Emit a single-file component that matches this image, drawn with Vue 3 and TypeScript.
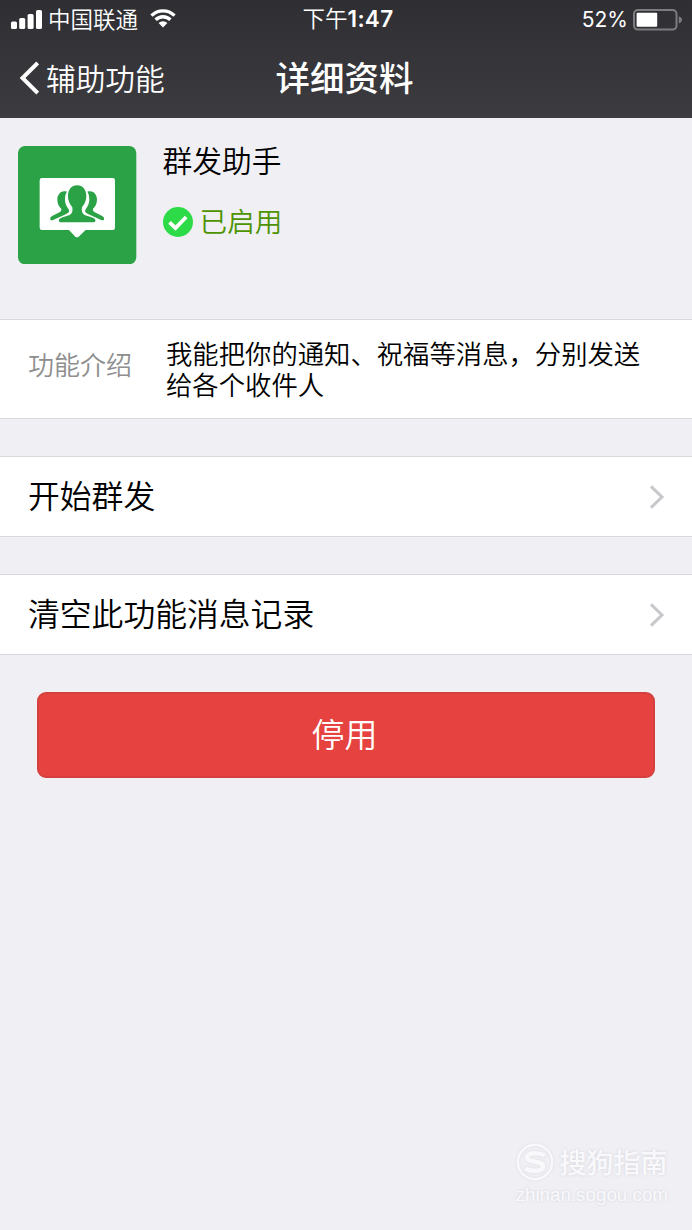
<script setup lang="ts">
interface ActionRow {
  id: string
  label: string
}

const rows: ActionRow[] = [
  { id: 'start', label: '开始群发' },
  { id: 'clear', label: '清空此功能消息记录' },
]

const intro = '我能把你的通知、祝福等消息，分别发送\n给各个收件人'
</script>

<template>
  <div class="screen">
    <header class="top">
      <div class="status">
        <div class="carrier">
          <svg class="signal" viewBox="0 0 31 19" aria-hidden="true">
            <rect x="0" y="11.5" width="6" height="7.5" rx="1.6" />
            <rect x="8.2" y="8" width="6" height="11" rx="1.6" />
            <rect x="16.6" y="4" width="6" height="15" rx="1.6" />
            <rect x="25" y="0" width="6" height="19" rx="1.6" />
          </svg>
          <span class="carrier-name">中国联通</span>
          <svg class="wifi" viewBox="0 0 26 19" aria-hidden="true">
            <path d="M1.5 6.6A16.3 16.3 0 0 1 24.5 6.6" />
            <path d="M5.6 10.8A10.5 10.5 0 0 1 20.4 10.8" />
            <path class="dot" d="M8.6 14.1A6.2 6.2 0 0 1 17.4 14.1L13 18.6Z" />
          </svg>
        </div>
        <div class="time">下午<b>1:47</b></div>
        <div class="power">
          <span>52%</span>
          <svg class="battery" viewBox="0 0 50 22" aria-hidden="true">
            <rect class="shell" x="1" y="1" width="42.5" height="19.6" rx="4" />
            <rect class="charge" x="3.6" y="3.8" width="20.6" height="14" rx="1" />
            <path class="cap" d="M45.8 7.2Q49 8.4 49 10.8T45.8 14.4Z" />
          </svg>
        </div>
      </div>
      <nav class="nav">
        <div class="back">
          <svg viewBox="0 0 20 34" aria-hidden="true"><path d="M18.700 2L3.500 17L18.700 32" /></svg>
          <span>辅助功能</span>
        </div>
        <h1>详细资料</h1>
      </nav>
    </header>

    <section class="profile">
      <svg class="avatar" viewBox="0 0 355 355" aria-hidden="true">
        <rect width="355" height="355" rx="21" fill="#2ba245" />
        <path
          d="M72 96H284Q291 96 291 103V245Q291 252 284 252H203L182 272Q177 276 172 272L153 252H72Q65 252 65 245V103Q65 96 72 96Z"
          fill="#fff"
        />
        <g fill="#2ba245">
          <path d="M147 137C128 131 118 146 118 161C118 174 124 183 130 188Q132 194 126 198L101 211Q95 215 97 221Q100 225 107 221L140 206C154 200 156 196 151 188C145 180 141 172 141 161C141 150 143 143 147 137Z" />
          <path d="M208 137C227 131 237 146 237 161C237 174 231 183 225 188Q223 194 229 198L254 211Q260 215 258 221Q255 225 248 221L215 206C201 200 199 196 204 188C210 180 214 172 214 161C214 150 212 143 208 137Z" />
          <path d="M177.500 118C160 118 150 132 150 151C150 165 156 176 163 184Q166 202 155 207L130 215Q121 219 123 226Q124 229 128 229H227Q231 229 232 226Q234 219 225 215L200 207Q189 202 192 184C199 176 205 165 205 151C205 132 195 118 177.500 118Z" />
        </g>
      </svg>
      <div class="summary">
        <div class="name">群发助手</div>
        <div class="state">
          <svg viewBox="0 0 30 30" aria-hidden="true">
            <circle cx="15" cy="15" r="15" fill="#2cdb47" />
            <path d="M6.500 15.400L12.500 21L23.200 10" />
          </svg>
          <span>已启用</span>
        </div>
      </div>
    </section>

    <section class="intro">
      <div class="intro-label">功能介绍</div>
      <div class="intro-text">{{ intro }}</div>
    </section>

    <div v-for="row in rows" :key="row.id" class="row">
      <span>{{ row.label }}</span>
      <svg viewBox="0 0 16 26" aria-hidden="true"><path d="M2 2.300L13 13L2 23.700" /></svg>
    </div>

    <button class="disable" type="button">停用</button>

    <footer class="watermark">
      <div class="brand">
        <svg viewBox="0 0 38 38" aria-hidden="true">
          <circle cx="19" cy="19" r="17.200" />
          <path d="M29 12.500C22 9 11 9.500 11 14.500C11 19.500 27 17.500 27 23.500C27 28.500 16 29 9 25.500" />
        </svg>
        <span>搜狗指南</span>
      </div>
      <div class="site">zhinan.sogou.com</div>
    </footer>
  </div>
</template>

<style>
body {
  margin: 0;
  background: #efeff4;
}
</style>

<style scoped>
.screen {
  display: flex;
  flex-direction: column;
  box-sizing: border-box;
  width: 692px;
  height: 1230px;
  overflow: hidden;
  background: #efeff4;
  color: #000;
  font-family: 'Noto Sans CJK SC', sans-serif;
  font-weight: 350;
}

svg {
  display: block;
  flex: none;
}

.top {
  height: 118px;
  background: linear-gradient(#2f2e33, #3c3b40);
  color: #fff;
}

.status {
  display: grid;
  grid-template-columns: 1fr auto 1fr;
  height: 38px;
  align-items: center;
  padding: 0 10px 0 11px;
  font-size: 22.500px;
  line-height: 34px;
}

.carrier {
  display: flex;
  align-items: center;
}

.signal {
  width: 31px;
  height: 19px;
  margin-bottom: 2px;
  fill: #fff;
}

.carrier-name {
  margin: 0 0 4px 6px;
}

.wifi {
  width: 26px;
  height: 19px;
  margin: 0 0 3px 12px;
}

.wifi path {
  fill: none;
  stroke: #fff;
  stroke-width: 3.400;
}

.wifi .dot {
  fill: #fff;
  stroke: none;
}

.time {
  margin: 0 0 4px 3px;
}

.time b {
  font-family: Inter, sans-serif;
  font-size: 22.500px;
  font-weight: 600;
  letter-spacing: 0.300px;
}

.power {
  display: flex;
  justify-content: flex-end;
  align-items: center;
  margin-bottom: 1px;
  font-family: Inter, sans-serif;
  font-size: 21px;
  font-weight: 400;
}

.battery {
  width: 50px;
  height: 22px;
  margin-left: 5px;
  margin-right: -1px;
}

.shell {
  fill: none;
  stroke: #7d7d80;
  stroke-width: 2;
}

.charge {
  fill: #fff;
}

.cap {
  fill: #7d7d80;
}

.nav {
  display: grid;
  grid-template-columns: 1fr auto 1fr;
  align-items: center;
  height: 80px;
  padding: 0 21px 0 19px;
}

.back {
  display: flex;
  align-items: center;
  font-size: 29.700px;
  line-height: 44px;
}

.back span {
  margin-bottom: 1px;
}

.back svg {
  width: 20px;
  height: 34px;
  margin-right: 7px;
}

.back path {
  fill: none;
  stroke: #fff;
  stroke-width: 4;
}

h1 {
  margin: 0 0 4px -1px;
  font-size: 34.500px;
  line-height: 50px;
  font-weight: 500;
}

.profile {
  display: flex;
  height: 201px;
  box-sizing: border-box;
  padding: 27.700px 18.300px 0;
}

.avatar {
  width: 118.300px;
  height: 118.300px;
}

.summary {
  margin-left: 26px;
}

.name {
  margin-top: -8px;
  font-size: 29.700px;
  line-height: 44px;
}

.state {
  display: flex;
  align-items: center;
  margin-top: 18px;
  color: #4d9400;
  font-size: 27.600px;
  line-height: 40px;
}

.state span {
  margin-bottom: 5px;
}

.state svg {
  width: 30px;
  height: 30px;
  margin-right: 7px;
}

.state path {
  fill: none;
  stroke: #fff;
  stroke-width: 3.800;
}

.intro {
  display: flex;
  align-items: center;
  box-sizing: border-box;
  height: 100px;
  border: solid #d9d9dd;
  border-width: 1px 0;
  padding: 0 28px;
  background: #fff;
  font-size: 26.350px;
  line-height: 30.500px;
}

.intro-label {
  width: 138px;
  margin-top: -9px;
  color: #8e8e8e;
  font-size: 26px;
}

.intro-text {
  margin-top: -1px;
  white-space: pre;
}

.row {
  display: flex;
  align-items: center;
  justify-content: space-between;
  box-sizing: border-box;
  height: 81px;
  margin-top: 37px;
  border: solid #d9d9dd;
  border-width: 1px 0;
  padding: 0 27px 0 28px;
  background: #fff;
  font-size: 31.800px;
  line-height: 46px;
}

.row span {
  margin-bottom: 5px;
}

.row svg {
  width: 16px;
  height: 26px;
}

.row path {
  fill: none;
  stroke: #c7c7cc;
  stroke-width: 3;
}

.disable {
  box-sizing: border-box;
  height: 86.500px;
  margin: 36.500px 37px 0;
  border: 2px solid #d5403f;
  border-radius: 9px;
  padding: 0 3px 3px 0;
  background: #e64340;
  color: #fff;
  font: 350 33px/50px 'Noto Sans CJK SC', sans-serif;
}

.watermark {
  margin: auto 24px 23px auto;
  color: #f9f9fc;
  text-shadow: 0 0 3px #d2d2d9;
}

.brand {
  display: flex;
  align-items: center;
  font-size: 27px;
  line-height: 38px;
  font-weight: 500;
}

.brand svg {
  width: 38px;
  height: 38px;
  margin-right: 6px;
  filter: drop-shadow(0 0 1px #d9d9df);
}

.brand circle,
.brand path {
  fill: none;
  stroke: #f9f9fc;
  stroke-width: 2.400;
}

.brand path {
  stroke-width: 4.500;
}

.site {
  margin-top: 2px;
  font: 18.800px/24px 'Liberation Sans', Arial, sans-serif;
}
</style>
